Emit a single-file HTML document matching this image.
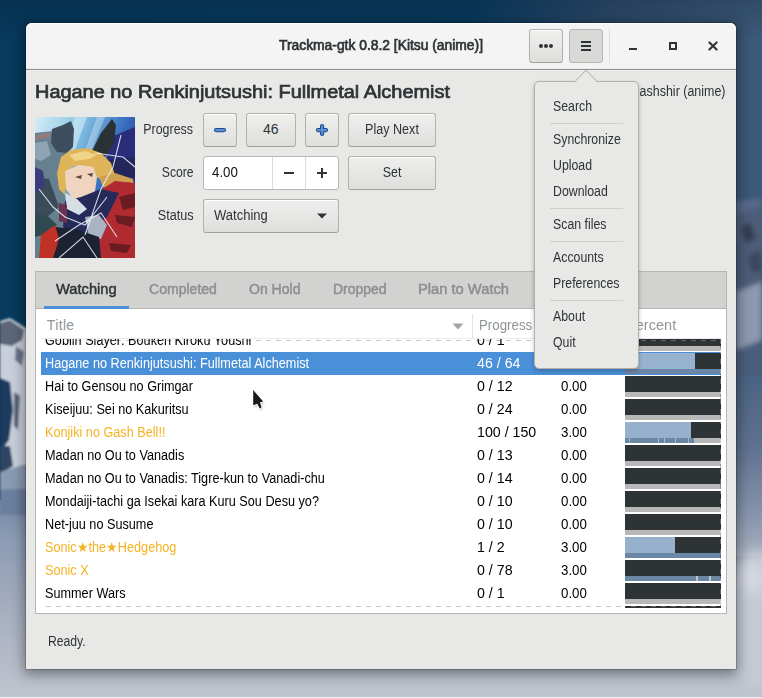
<!DOCTYPE html><html><head><meta charset="utf-8"><style>
html,body{margin:0;padding:0;width:762px;height:698px;overflow:hidden;}
body{position:relative;font-family:"Liberation Sans",sans-serif;}
.a{position:absolute;}
.t{position:absolute;white-space:nowrap;line-height:20px;}
</style></head><body>
<svg class="a" style="left:0;top:0" width="762" height="698" viewBox="0 0 762 698">
<defs>
<linearGradient id="gtop" x1="0" y1="0" x2="1" y2="0"><stop offset="0" stop-color="#073a5e"/><stop offset="0.62" stop-color="#093c60"/><stop offset="0.8" stop-color="#2c4a6a"/><stop offset="1" stop-color="#3c5a79"/></linearGradient>
<linearGradient id="gleft" x1="0" y1="0" x2="0" y2="1"><stop offset="0" stop-color="#7488a6"/><stop offset="0.2" stop-color="#8c9cb4"/><stop offset="0.5" stop-color="#a2abbe"/><stop offset="1" stop-color="#c0c4ce"/></linearGradient>
<linearGradient id="gright" x1="0" y1="0" x2="0" y2="1"><stop offset="0" stop-color="#30506f"/><stop offset="0.5" stop-color="#3a5878"/><stop offset="1" stop-color="#4a6686"/></linearGradient>
<linearGradient id="gright2" x1="0" y1="0" x2="0" y2="1"><stop offset="0" stop-color="#4a6282"/><stop offset="0.4" stop-color="#5f7290"/><stop offset="0.8" stop-color="#8a98ae"/><stop offset="1" stop-color="#a8b0c0"/></linearGradient>
<linearGradient id="gtopdark" x1="0" y1="0" x2="0" y2="1"><stop offset="0" stop-color="#000814" stop-opacity="0.18"/><stop offset="1" stop-color="#000814" stop-opacity="0"/></linearGradient>
<filter id="bl" x="-0.2" y="-0.2" width="1.4" height="1.4"><feGaussianBlur stdDeviation="1.2"/></filter>
<filter id="bl3" x="-0.5" y="-0.5" width="2" height="2"><feGaussianBlur stdDeviation="2.5"/></filter>
<filter id="bl2" x="-0.5" y="-0.5" width="2" height="2"><feGaussianBlur stdDeviation="6"/></filter>
</defs>
<rect width="762" height="698" fill="url(#gtop)"/>
<rect x="0" y="500" width="762" height="198" fill="url(#gleft)"/>
<rect x="0" y="0" width="762" height="40" fill="url(#gtopdark)"/>
<g filter="url(#bl)">
<path d="M0 321 L10 318 L26 328 L40 335 L40 490 L0 490 Z" fill="#c9cfda"/>
<path d="M0 323 L10 320 L24 330 L22 340 L12 346 L0 344 Z" fill="#5c6678"/>
<path d="M16 346 L24 352 L22 366 L15 360 Z" fill="#6a748a"/>
<path d="M0 378 L10 382 L13 410 L9 440 L0 452 Z" fill="#1f3b5e"/>
<path d="M14 392 L20 396 L18 430 L14 426 Z" fill="#56647e"/>
<path d="M0 446 L10 446 L13 466 L0 474 Z" fill="#2e4464"/>
<path d="M0 472 L26 464 L40 470 L40 492 L0 494 Z" fill="#8a9ab2"/>
<path d="M0 490 L40 488 L40 515 L0 515 Z" fill="#6a7e9e"/>
</g><g filter="url(#bl3)">
<path d="M700 205 L762 198 L762 440 L700 440 Z" fill="#56698a"/>
<path d="M736 215 L762 205 L762 285 L736 292 Z" fill="#4e5d78"/>
<path d="M740 228 L750 222 L756 238 L746 244 Z" fill="#323e52"/>
<path d="M748 256 L760 250 L762 270 L752 274 Z" fill="#3a465e"/>
<path d="M736 292 L762 282 L762 340 L736 350 Z" fill="#8b9ab0"/>
<path d="M736 350 L762 340 L762 380 L736 384 Z" fill="#4a5e7c"/>
</g>
<rect x="736" y="376" width="26" height="180" fill="url(#gright2)"/>
<ellipse cx="760" cy="620" rx="40" ry="70" fill="#c4c9d4" filter="url(#bl2)"/>
<ellipse cx="752" cy="578" rx="12" ry="16" fill="#d4d8e0" filter="url(#bl2)"/>
<rect x="0" y="697" width="762" height="1" fill="#f0f1f4"/>
</svg>
<div class="a" style="left:26px;top:23px;width:710px;height:646px;background:#e8e8e7;border-radius:6px 6px 0 0;box-shadow:0 3px 13px 2px rgba(0,0,0,0.4),0 0 0 1px rgba(0,0,0,0.18);"></div>
<div class="a" style="left:26px;top:23px;width:710px;height:46px;background:#f4f4f4;border-radius:6px 6px 0 0;box-shadow:inset 0 1px rgba(255,255,255,0.9);"></div>
<div class="a" style="left:26px;top:68px;width:710px;height:1px;background:#ebebea;"></div>
<div class="a" style="left:26px;top:69px;width:710px;height:1px;background:#92928e;"></div>
<div class="a" style="left:26px;top:70px;width:710px;height:1px;background:#ededec;"></div>
<div class="t" style="top:35.36px;font-size:14.67px;font-weight:normal;color:#2e3436;left:80.60000000000002px;width:600px;text-align:center;transform:scaleX(0.944);transform-origin:center;-webkit-text-stroke:0.7px #2e3436;">Trackma-gtk 0.8.2 [Kitsu (anime)]</div>
<div class="a" style="left:529px;top:29px;width:34px;height:34px;box-sizing:border-box;border:1px solid #b1b1ae;border-bottom-color:#9f9f9c;border-radius:3px;background:linear-gradient(#efefee,#dededc);box-shadow:inset 0 1px #fff;"></div>
<div class="a" style="left:539px;top:44px;width:4px;height:4px;background:#2e3436;border-radius:50%;"></div>
<div class="a" style="left:544px;top:44px;width:4px;height:4px;background:#2e3436;border-radius:50%;"></div>
<div class="a" style="left:549px;top:44px;width:4px;height:4px;background:#2e3436;border-radius:50%;"></div>
<div class="a" style="left:569px;top:29px;width:34px;height:34px;box-sizing:border-box;border:1px solid #b6b6b3;border-radius:3px;background:#d9d9d7;"></div>
<div class="a" style="left:581px;top:41px;width:10px;height:2px;background:#2e3436;"></div>
<div class="a" style="left:581px;top:45px;width:10px;height:2px;background:#2e3436;"></div>
<div class="a" style="left:581px;top:49px;width:10px;height:2px;background:#2e3436;"></div>
<div class="a" style="left:609px;top:29px;width:1px;height:34px;background:#dcdcda;"></div>
<div class="a" style="left:629px;top:48px;width:8px;height:2px;background:#2e3436;"></div>
<div class="a" style="left:669px;top:42px;width:8px;height:8px;box-sizing:border-box;border:2px solid #2e3436;"></div>
<svg class="a" style="left:706px;top:39px" width="14" height="14"><path d="M3.4 3.4L10.6 10.6M10.6 3.4L3.4 10.6" stroke="#2e3436" stroke-width="2.1" stroke-linecap="round"/></svg>
<div class="t" style="top:82.36px;font-size:18px;font-weight:normal;color:#2e3436;left:35.2px;transform:scaleX(1.106);transform-origin:left;-webkit-text-stroke:0.7px #2e3436;">Hagane no Renkinjutsushi: Fullmetal Alchemist</div>
<div class="t" style="top:81.18px;font-size:14px;font-weight:normal;color:#2e3436;right:36.5px;transform:scaleX(0.89);transform-origin:right;">ashshir (anime)</div>
<svg class="a" style="left:35px;top:117px" width="100" height="141" viewBox="0 0 100 141">
<defs>
<linearGradient id="sky" x1="0" y1="0" x2="1" y2="0.55"><stop offset="0" stop-color="#d6ecf4"/><stop offset="0.35" stop-color="#8cc8e6"/><stop offset="0.7" stop-color="#3a70c0"/><stop offset="1" stop-color="#23287a"/></linearGradient>
<filter id="cb"><feGaussianBlur stdDeviation="0.7"/></filter>
</defs>
<rect width="100" height="141" fill="url(#sky)"/>
<g filter="url(#cb)">
<path d="M40 0 L52 0 L30 60 L22 60 Z" fill="#e6f4fa" opacity="0.5"/>
<path d="M62 0 L70 0 L50 50 L44 50 Z" fill="#d8eef8" opacity="0.4"/>
<path d="M76 20 L100 10 L100 62 L68 60 Z" fill="#2a2e78"/>
<path d="M66 44 L100 40 L100 60 L68 60 Z" fill="#24265a"/>
<path d="M0 16 L18 14 L32 38 L32 62 L28 110 L20 141 L0 141 Z" fill="#66808f"/>
<path d="M0 26 L12 24 L16 38 L6 44 L0 42 Z" fill="#8ea4b2"/>
<path d="M17 12 L28 8 L36 4 L39 12 L38 30 L32 36 L22 35 L16 26 Z" fill="#3e4e60"/>
<path d="M2 18 L16 15 L14 21 L0 23 Z" fill="#b07a70" opacity="0.6"/>
<path d="M0 60 L14 62 L24 90 L12 100 L0 98 Z" fill="#3a4c5a"/>
<path d="M0 50 L8 54 L10 70 L0 76 Z" fill="#3a3c7a"/>
<path d="M56 36 L66 16 L77 2 L81 8 L79 26 L72 38 L60 44 Z" fill="#2a3034"/>
<path d="M22 56 L26 40 L36 33 L52 31 L66 36 L76 46 L80 58 L72 66 L62 60 L58 52 L46 48 L36 50 L32 62 L30 78 L24 72 Z" fill="#e0b458"/>
<path d="M34 38 L50 34 L62 38 L54 42 L40 44 Z" fill="#f0d488"/>
<path d="M64 60 L80 56 L98 62 L100 74 L86 76 L68 70 Z" fill="#cfa050"/>
<path d="M30 54 L44 48 L58 50 L62 60 L60 74 L52 82 L38 82 L31 72 Z" fill="#f0d4c0"/>
<path d="M40 60 L47 58 L46 62 Z M52 57 L58 56 L57 60 Z" fill="#5a4a40"/>
<path d="M64 74 L80 64 L100 66 L100 141 L64 141 L62 120 Z" fill="#b02a32"/>
<path d="M84 80 L100 76 L100 90 L88 93 Z M80 98 L100 100 L97 110 L82 106 Z M74 126 L96 128 L92 136 L76 134 Z" fill="#6a1a22"/>
<path d="M30 84 L46 80 L66 72 L84 76 L72 100 L56 112 L40 120 L28 110 Z" fill="#262b58"/>
<path d="M30 76 L42 82 L52 92 L44 98 L32 92 Z" fill="#d8dee6"/>
<path d="M50 100 L64 98 L72 108 L66 122 L54 120 Z" fill="#a8b4c2"/>
<path d="M20 110 L40 112 L64 120 L66 141 L18 141 Z" fill="#1c2030"/>
<path d="M24 86 L32 88 L32 106 L24 104 Z" fill="#6a3050"/>
<path d="M0 96 L14 100 L22 108 L8 118 L0 120 Z" fill="#2e4850"/>
<path d="M6 118 L20 108 L24 122 L18 141 L4 141 Z" fill="#c03228"/>
</g>
<path d="M4 72 L18 90 L30 100 L50 108 L72 80 M86 18 L78 50 L66 72 L50 118 M20 124 L44 108 L66 96 L82 120 M60 36 L88 40 L100 50 M24 141 L48 120 L62 141" stroke="#eef2ff" stroke-width="1.1" fill="none" opacity="0.85"/>
</svg>
<div class="t" style="top:118.78px;font-size:14px;font-weight:normal;color:#2e3436;right:568.5px;transform:scaleX(0.888);transform-origin:right;">Progress</div>
<div class="t" style="top:162.38px;font-size:14px;font-weight:normal;color:#2e3436;right:568.5px;transform:scaleX(0.87);transform-origin:right;">Score</div>
<div class="t" style="top:205.28px;font-size:14px;font-weight:normal;color:#2e3436;right:568.5px;transform:scaleX(0.904);transform-origin:right;">Status</div>
<div class="a" style="left:203px;top:113px;width:34px;height:34px;box-sizing:border-box;border:1px solid #b1b1ae;border-bottom-color:#9f9f9c;border-radius:3px;background:linear-gradient(#efefee,#dededc);box-shadow:inset 0 1px #fff;"></div>
<svg class="a" style="left:212px;top:128px" width="16" height="6"><line x1="4" y1="2.1" x2="12" y2="2.1" stroke="#1f4b8e" stroke-width="4.2" stroke-linecap="round"/><line x1="4" y1="2.1" x2="12" y2="2.1" stroke="#5b8fd2" stroke-width="2.2" stroke-linecap="round"/></svg>
<div class="a" style="left:246px;top:113px;width:50px;height:34px;box-sizing:border-box;border:1px solid #b1b1ae;border-bottom-color:#9f9f9c;border-radius:3px;background:linear-gradient(#efefee,#dededc);box-shadow:inset 0 1px #fff;"></div>
<div class="t" style="top:119.18px;font-size:14px;font-weight:normal;color:#2e3436;left:-29.19999999999999px;width:600px;text-align:center;">46</div>
<div class="a" style="left:305px;top:113px;width:34px;height:34px;box-sizing:border-box;border:1px solid #b1b1ae;border-bottom-color:#9f9f9c;border-radius:3px;background:linear-gradient(#efefee,#dededc);box-shadow:inset 0 1px #fff;"></div>
<svg class="a" style="left:314px;top:122px" width="16" height="16"><path d="M4 8.1H12M8.1 4V12" stroke="#1f4b8e" stroke-width="4.2" stroke-linecap="round"/><path d="M4 8.1H12M8.1 4V12" stroke="#5b8fd2" stroke-width="2.2" stroke-linecap="round"/></svg>
<div class="a" style="left:348px;top:113px;width:88px;height:34px;box-sizing:border-box;border:1px solid #b1b1ae;border-bottom-color:#9f9f9c;border-radius:3px;background:linear-gradient(#efefee,#dededc);box-shadow:inset 0 1px #fff;"></div>
<div class="t" style="top:118.58px;font-size:14px;font-weight:normal;color:#2e3436;left:91.5px;width:600px;text-align:center;transform:scaleX(0.898);transform-origin:center;">Play Next</div>
<div class="a" style="left:203px;top:156px;width:136px;height:34px;box-sizing:border-box;border:1px solid #b6b6b3;border-radius:3px;background:#fff;"></div>
<div class="a" style="left:272px;top:157px;width:1px;height:32px;background:#dcdcda;"></div>
<div class="a" style="left:305px;top:157px;width:1px;height:32px;background:#dcdcda;"></div>
<div class="t" style="top:161.58px;font-size:14px;font-weight:normal;color:#101214;left:212px;transform:scaleX(0.95);transform-origin:left;">4.00</div>
<div class="a" style="left:284px;top:172px;width:10px;height:2px;background:#2e3436;"></div>
<div class="a" style="left:317px;top:172px;width:10px;height:2px;background:#2e3436;"></div>
<div class="a" style="left:321px;top:168px;width:2px;height:10px;background:#2e3436;"></div>
<div class="a" style="left:348px;top:156px;width:88px;height:34px;box-sizing:border-box;border:1px solid #b1b1ae;border-bottom-color:#9f9f9c;border-radius:3px;background:linear-gradient(#efefee,#dededc);box-shadow:inset 0 1px #fff;"></div>
<div class="t" style="top:161.58px;font-size:14px;font-weight:normal;color:#2e3436;left:92px;width:600px;text-align:center;transform:scaleX(0.89);transform-origin:center;">Set</div>
<div class="a" style="left:203px;top:199px;width:136px;height:34px;box-sizing:border-box;border:1px solid #b1b1ae;border-bottom-color:#9f9f9c;border-radius:3px;background:linear-gradient(#efefee,#dededc);box-shadow:inset 0 1px #fff;"></div>
<div class="t" style="top:205.08px;font-size:14px;font-weight:normal;color:#2e3436;left:214px;transform:scaleX(0.93);transform-origin:left;">Watching</div>
<svg class="a" style="left:316px;top:212px" width="12" height="8"><path d="M1 1.5h10l-5 5z" fill="#2e3436"/></svg>
<div class="a" style="left:35px;top:271px;width:692px;height:343px;box-sizing:border-box;border:1px solid #b6b6b3;background:#fff;"></div>
<div class="a" style="left:36px;top:272px;width:690px;height:37px;background:#d2d2d0;"></div>
<div class="a" style="left:36px;top:308px;width:690px;height:1px;background:#b6b6b3;"></div>
<div class="a" style="left:44px;top:306px;width:85px;height:3px;background:#4a90d9;"></div>
<div class="t" style="top:278.55px;font-size:14.4px;font-weight:normal;color:#2e3436;left:55.6px;transform:scaleX(1.02);transform-origin:left;-webkit-text-stroke:0.45px #2e3436;">Watching</div>
<div class="t" style="top:278.55px;font-size:14.4px;font-weight:normal;color:#8b8e8f;left:148.7px;transform:scaleX(0.976);transform-origin:left;-webkit-text-stroke:0.45px #8b8e8f;">Completed</div>
<div class="t" style="top:278.55px;font-size:14.4px;font-weight:normal;color:#8b8e8f;left:249px;transform:scaleX(0.975);transform-origin:left;-webkit-text-stroke:0.45px #8b8e8f;">On Hold</div>
<div class="t" style="top:278.55px;font-size:14.4px;font-weight:normal;color:#8b8e8f;left:332.9px;transform:scaleX(0.97);transform-origin:left;-webkit-text-stroke:0.45px #8b8e8f;">Dropped</div>
<div class="t" style="top:278.55px;font-size:14.4px;font-weight:normal;color:#8b8e8f;left:418.2px;transform:scaleX(1.022);transform-origin:left;-webkit-text-stroke:0.45px #8b8e8f;">Plan to Watch</div>
<div class="t" style="top:315.38px;font-size:14px;font-weight:normal;color:#919596;letter-spacing:0.35px;left:46.8px;">Title</div>
<svg class="a" style="left:452px;top:323px" width="12" height="7"><path d="M0.5 0.5h11l-5.5 6z" fill="#a2a4a5"/></svg>
<div class="a" style="left:472px;top:314px;width:1px;height:24px;background:#e2e2e0;"></div>
<div class="t" style="top:315.18px;font-size:14px;font-weight:normal;color:#919596;left:478.5px;transform:scaleX(0.95);transform-origin:left;">Progress</div>
<div class="t" style="top:315.18px;font-size:14px;font-weight:normal;color:#919596;left:560px;transform:scaleX(0.9);transform-origin:left;">Score</div>
<div class="a" style="left:618px;top:314px;width:1px;height:24px;background:#e2e2e0;"></div>
<div class="t" style="top:315.18px;font-size:14px;font-weight:normal;color:#919596;left:626px;transform:scaleX(1.04);transform-origin:left;">Percent</div>
<div class="a" style="left:41px;top:339px;width:680px;height:269px;overflow:hidden">
<div class="t" style="top:-8.62px;font-size:14px;font-weight:normal;color:#000;left:3.799999999999997px;transform:scaleX(0.905);transform-origin:left;">Goblin Slayer: Bouken Kiroku Youshi</div>
<div class="t" style="top:-8.62px;font-size:14px;font-weight:normal;color:#000;left:435.8px;transform:scaleX(1.015);transform-origin:left;">0 / 1</div>
<div class="t" style="top:-8.62px;font-size:14px;font-weight:normal;color:#000;left:520.2px;transform:scaleX(0.95);transform-origin:left;">0.00</div>
<div class="a" style="left:584px;top:-9px;width:96px;height:16px;background:#2e3436;"></div>
<div class="a" style="left:584px;top:7px;width:96px;height:5px;background:#b8b8b8;"></div>
<div class="a" style="left:0px;top:13px;width:680px;height:23px;background:#4a90d9;"></div>
<div class="t" style="top:14.38px;font-size:14px;font-weight:normal;color:#fff;left:3.799999999999997px;transform:scaleX(0.905);transform-origin:left;">Hagane no Renkinjutsushi: Fullmetal Alchemist</div>
<div class="t" style="top:14.38px;font-size:14px;font-weight:normal;color:#fff;left:435.8px;transform:scaleX(1.015);transform-origin:left;">46 / 64</div>
<div class="a" style="left:584px;top:14px;width:96px;height:16px;background:#2e3436;"></div>
<div class="a" style="left:584px;top:14px;width:70px;height:16px;background:#98b3cf;"></div>
<div class="a" style="left:584px;top:30px;width:96px;height:5px;background:#6b87a6;"></div>
<div class="t" style="top:37.38px;font-size:14px;font-weight:normal;color:#000;left:3.799999999999997px;transform:scaleX(0.905);transform-origin:left;">Hai to Gensou no Grimgar</div>
<div class="t" style="top:37.38px;font-size:14px;font-weight:normal;color:#000;left:435.8px;transform:scaleX(1.015);transform-origin:left;">0 / 12</div>
<div class="t" style="top:37.38px;font-size:14px;font-weight:normal;color:#000;left:520.2px;transform:scaleX(0.95);transform-origin:left;">0.00</div>
<div class="a" style="left:584px;top:37px;width:96px;height:16px;background:#2e3436;"></div>
<div class="a" style="left:584px;top:53px;width:96px;height:5px;background:#b8b8b8;"></div>
<div class="t" style="top:60.38px;font-size:14px;font-weight:normal;color:#000;left:3.799999999999997px;transform:scaleX(0.905);transform-origin:left;">Kiseijuu: Sei no Kakuritsu</div>
<div class="t" style="top:60.38px;font-size:14px;font-weight:normal;color:#000;left:435.8px;transform:scaleX(1.015);transform-origin:left;">0 / 24</div>
<div class="t" style="top:60.38px;font-size:14px;font-weight:normal;color:#000;left:520.2px;transform:scaleX(0.95);transform-origin:left;">0.00</div>
<div class="a" style="left:584px;top:60px;width:96px;height:16px;background:#2e3436;"></div>
<div class="a" style="left:584px;top:76px;width:96px;height:5px;background:#b8b8b8;"></div>
<div class="t" style="top:83.38px;font-size:14px;font-weight:normal;color:#f5b324;left:3.799999999999997px;transform:scaleX(0.905);transform-origin:left;">Konjiki no Gash Bell!!</div>
<div class="t" style="top:83.38px;font-size:14px;font-weight:normal;color:#000;left:435.8px;transform:scaleX(1.015);transform-origin:left;">100 / 150</div>
<div class="t" style="top:83.38px;font-size:14px;font-weight:normal;color:#000;left:520.2px;transform:scaleX(0.95);transform-origin:left;">3.00</div>
<div class="a" style="left:584px;top:83px;width:96px;height:16px;background:#2e3436;"></div>
<div class="a" style="left:584px;top:83px;width:66px;height:16px;background:#97b0cb;"></div>
<div class="a" style="left:584px;top:99px;width:96px;height:5px;background:#6b87a6;"></div>
<div class="a" style="left:654px;top:99px;width:26px;height:5px;background:#b8b8b8;"></div>
<div class="a" style="left:588px;top:99px;width:1px;height:5px;background:#a9bad0;"></div>
<div class="a" style="left:617px;top:99px;width:1px;height:5px;background:#a9bad0;"></div>
<div class="a" style="left:623px;top:99px;width:1px;height:5px;background:#a9bad0;"></div>
<div class="a" style="left:634px;top:99px;width:1px;height:5px;background:#a9bad0;"></div>
<div class="a" style="left:647px;top:99px;width:1px;height:5px;background:#a9bad0;"></div>
<div class="a" style="left:653px;top:99px;width:1px;height:5px;background:#a9bad0;"></div>
<div class="t" style="top:106.38px;font-size:14px;font-weight:normal;color:#000;left:3.799999999999997px;transform:scaleX(0.905);transform-origin:left;">Madan no Ou to Vanadis</div>
<div class="t" style="top:106.38px;font-size:14px;font-weight:normal;color:#000;left:435.8px;transform:scaleX(1.015);transform-origin:left;">0 / 13</div>
<div class="t" style="top:106.38px;font-size:14px;font-weight:normal;color:#000;left:520.2px;transform:scaleX(0.95);transform-origin:left;">0.00</div>
<div class="a" style="left:584px;top:106px;width:96px;height:16px;background:#2e3436;"></div>
<div class="a" style="left:584px;top:122px;width:96px;height:5px;background:#b8b8b8;"></div>
<div class="t" style="top:129.38px;font-size:14px;font-weight:normal;color:#000;left:3.799999999999997px;transform:scaleX(0.905);transform-origin:left;">Madan no Ou to Vanadis: Tigre-kun to Vanadi-chu</div>
<div class="t" style="top:129.38px;font-size:14px;font-weight:normal;color:#000;left:435.8px;transform:scaleX(1.015);transform-origin:left;">0 / 14</div>
<div class="t" style="top:129.38px;font-size:14px;font-weight:normal;color:#000;left:520.2px;transform:scaleX(0.95);transform-origin:left;">0.00</div>
<div class="a" style="left:584px;top:129px;width:96px;height:16px;background:#2e3436;"></div>
<div class="a" style="left:584px;top:145px;width:96px;height:5px;background:#b8b8b8;"></div>
<div class="t" style="top:152.38px;font-size:14px;font-weight:normal;color:#000;left:3.799999999999997px;transform:scaleX(0.905);transform-origin:left;">Mondaiji-tachi ga Isekai kara Kuru Sou Desu yo?</div>
<div class="t" style="top:152.38px;font-size:14px;font-weight:normal;color:#000;left:435.8px;transform:scaleX(1.015);transform-origin:left;">0 / 10</div>
<div class="t" style="top:152.38px;font-size:14px;font-weight:normal;color:#000;left:520.2px;transform:scaleX(0.95);transform-origin:left;">0.00</div>
<div class="a" style="left:584px;top:152px;width:96px;height:16px;background:#2e3436;"></div>
<div class="a" style="left:584px;top:168px;width:96px;height:5px;background:#b8b8b8;"></div>
<div class="t" style="top:175.38px;font-size:14px;font-weight:normal;color:#000;left:3.799999999999997px;transform:scaleX(0.905);transform-origin:left;">Net-juu no Susume</div>
<div class="t" style="top:175.38px;font-size:14px;font-weight:normal;color:#000;left:435.8px;transform:scaleX(1.015);transform-origin:left;">0 / 10</div>
<div class="t" style="top:175.38px;font-size:14px;font-weight:normal;color:#000;left:520.2px;transform:scaleX(0.95);transform-origin:left;">0.00</div>
<div class="a" style="left:584px;top:175px;width:96px;height:16px;background:#2e3436;"></div>
<div class="a" style="left:584px;top:191px;width:96px;height:5px;background:#b8b8b8;"></div>
<div class="t" style="top:198.38px;font-size:14px;font-weight:normal;color:#f5b324;left:3.799999999999997px;transform:scaleX(0.905);transform-origin:left;">Sonic★the★Hedgehog</div>
<div class="t" style="top:198.38px;font-size:14px;font-weight:normal;color:#000;left:435.8px;transform:scaleX(1.015);transform-origin:left;">1 / 2</div>
<div class="t" style="top:198.38px;font-size:14px;font-weight:normal;color:#000;left:520.2px;transform:scaleX(0.95);transform-origin:left;">3.00</div>
<div class="a" style="left:584px;top:198px;width:96px;height:16px;background:#2e3436;"></div>
<div class="a" style="left:584px;top:198px;width:50px;height:16px;background:#97b0cb;"></div>
<div class="a" style="left:584px;top:214px;width:96px;height:5px;background:#6b87a6;"></div>
<div class="t" style="top:221.38px;font-size:14px;font-weight:normal;color:#f5b324;left:3.799999999999997px;transform:scaleX(0.905);transform-origin:left;">Sonic X</div>
<div class="t" style="top:221.38px;font-size:14px;font-weight:normal;color:#000;left:435.8px;transform:scaleX(1.015);transform-origin:left;">0 / 78</div>
<div class="t" style="top:221.38px;font-size:14px;font-weight:normal;color:#000;left:520.2px;transform:scaleX(0.95);transform-origin:left;">3.00</div>
<div class="a" style="left:584px;top:221px;width:96px;height:16px;background:#2e3436;"></div>
<div class="a" style="left:584px;top:237px;width:96px;height:5px;background:#6b87a6;"></div>
<div class="a" style="left:655px;top:237px;width:2px;height:5px;background:#c4c4c4;"></div>
<div class="a" style="left:668px;top:237px;width:2px;height:5px;background:#c4c4c4;"></div>
<div class="t" style="top:244.38px;font-size:14px;font-weight:normal;color:#000;left:3.799999999999997px;transform:scaleX(0.905);transform-origin:left;">Summer Wars</div>
<div class="t" style="top:244.38px;font-size:14px;font-weight:normal;color:#000;left:435.8px;transform:scaleX(1.015);transform-origin:left;">0 / 1</div>
<div class="t" style="top:244.38px;font-size:14px;font-weight:normal;color:#000;left:520.2px;transform:scaleX(0.95);transform-origin:left;">0.00</div>
<div class="a" style="left:584px;top:244px;width:96px;height:16px;background:#2e3436;"></div>
<div class="a" style="left:584px;top:260px;width:96px;height:5px;background:#b8b8b8;"></div>
<div class="t" style="top:267.38px;font-size:14px;font-weight:normal;color:#000;left:3.799999999999997px;transform:scaleX(0.905);transform-origin:left;"></div>
<div class="t" style="top:267.38px;font-size:14px;font-weight:normal;color:#000;left:435.8px;transform:scaleX(1.015);transform-origin:left;"></div>
<div class="a" style="left:584px;top:267px;width:96px;height:16px;background:#2e3436;"></div>
<div class="a" style="left:584px;top:283px;width:96px;height:5px;background:#b8b8b8;"></div>
</div>
<div class="a" style="left:41px;top:338px;width:680px;height:1px;background:#e9e9e9;"></div>
<div class="a" style="left:41px;top:340px;width:680px;height:1px;background:repeating-linear-gradient(to right,rgba(255,255,255,0.25) 0 5px,rgba(0,0,0,0.22) 5px 10px);"></div>
<div class="a" style="left:41px;top:606px;width:680px;height:1px;background:repeating-linear-gradient(to right,rgba(255,255,255,0.25) 0 5px,rgba(0,0,0,0.22) 5px 10px);"></div>
<div class="a" style="left:720px;top:339px;width:1px;height:267px;background:repeating-linear-gradient(to bottom,rgba(255,255,255,0.25) 0 5px,rgba(0,0,0,0.22) 5px 10px);"></div>
<div class="t" style="top:630.78px;font-size:14px;font-weight:normal;color:#2e3436;left:48.3px;transform:scaleX(0.87);transform-origin:left;">Ready.</div>
<div class="a" style="left:534px;top:81px;width:105px;height:288px;box-sizing:border-box;background:#e8e8e7;border:1px solid #b0b0ad;border-radius:5px;box-shadow:0 2px 4px rgba(0,0,0,0.25);"></div>
<svg class="a" style="left:574px;top:69px" width="24" height="14"><path d="M0 13.5 L12 1.2 L24 13.5" fill="#e8e8e7" stroke="#a9a9a6" stroke-width="1"/><rect x="1.5" y="13" width="21" height="2" fill="#e8e8e7"/></svg>
<div class="t" style="top:96.38px;font-size:14px;font-weight:normal;color:#2e3436;left:552.8px;transform:scaleX(0.88);transform-origin:left;">Search</div>
<div class="t" style="top:129.38px;font-size:14px;font-weight:normal;color:#2e3436;left:552.8px;transform:scaleX(0.88);transform-origin:left;">Synchronize</div>
<div class="t" style="top:155.38px;font-size:14px;font-weight:normal;color:#2e3436;left:552.8px;transform:scaleX(0.88);transform-origin:left;">Upload</div>
<div class="t" style="top:181.38px;font-size:14px;font-weight:normal;color:#2e3436;left:552.8px;transform:scaleX(0.88);transform-origin:left;">Download</div>
<div class="t" style="top:214.38px;font-size:14px;font-weight:normal;color:#2e3436;left:552.8px;transform:scaleX(0.88);transform-origin:left;">Scan files</div>
<div class="t" style="top:247.38px;font-size:14px;font-weight:normal;color:#2e3436;left:552.8px;transform:scaleX(0.88);transform-origin:left;">Accounts</div>
<div class="t" style="top:273.38px;font-size:14px;font-weight:normal;color:#2e3436;left:552.8px;transform:scaleX(0.88);transform-origin:left;">Preferences</div>
<div class="t" style="top:306.38px;font-size:14px;font-weight:normal;color:#2e3436;left:552.8px;transform:scaleX(0.88);transform-origin:left;">About</div>
<div class="t" style="top:332.38px;font-size:14px;font-weight:normal;color:#2e3436;left:552.8px;transform:scaleX(0.88);transform-origin:left;">Quit</div>
<div class="a" style="left:550px;top:123px;width:73px;height:1px;background:#cfcfcd;"></div>
<div class="a" style="left:550px;top:208px;width:73px;height:1px;background:#cfcfcd;"></div>
<div class="a" style="left:550px;top:241px;width:73px;height:1px;background:#cfcfcd;"></div>
<div class="a" style="left:550px;top:300px;width:73px;height:1px;background:#cfcfcd;"></div>
<svg class="a" style="left:248px;top:385px" width="22" height="28"><defs><filter id="cs" x="-0.5" y="-0.5" width="2" height="2"><feGaussianBlur stdDeviation="1.1"/></filter></defs><path d="M5.2 5 L5.2 20.2 L9.2 18.8 L11.8 23.4 L13.5 22.6 L12 17.3 L15.2 16.5 Z" fill="rgba(0,0,0,0.4)" filter="url(#cs)" transform="translate(0.8,1.5)"/><path d="M5.2 5 L5.2 20.2 L9.2 18.8 L11.8 23.4 L13.5 22.6 L12 17.3 L15.2 16.5 Z" fill="#fff" stroke="#fff" stroke-width="2" stroke-linejoin="round"/><path d="M5.2 5 L5.2 20.2 L9.2 18.8 L11.8 23.4 L13.5 22.6 L12 17.3 L15.2 16.5 Z" fill="#1a1a1a"/></svg>
</body></html>
